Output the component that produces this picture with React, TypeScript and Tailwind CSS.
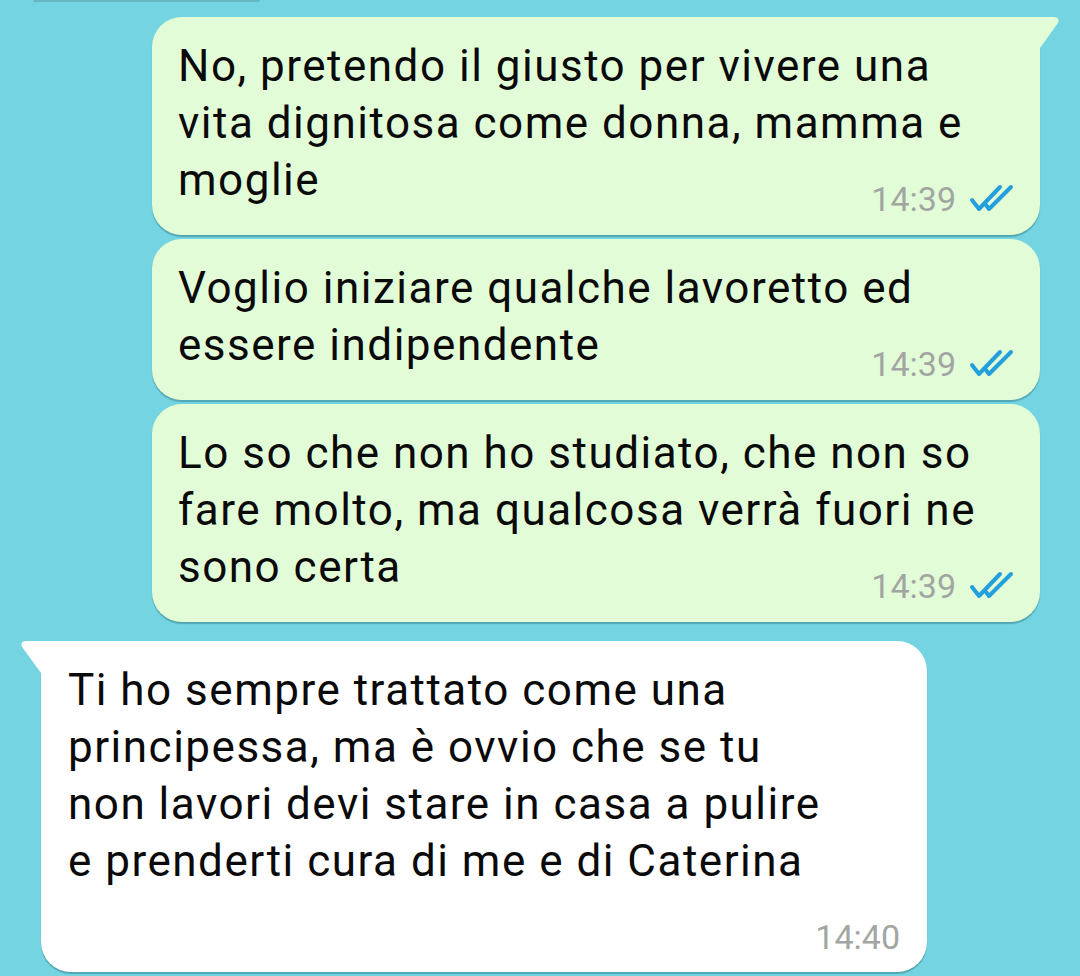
import React from "react";

const font = { fontFamily: "Roboto, 'Noto Sans', Arial, sans-serif" };

function Ticks() {
  return (
    <svg width="46" height="30" viewBox="0 0 46 30" className="ml-[13px] shrink-0">
      <path d="M3 16 L10 25 L31 3" fill="none" stroke="#23a0dc" strokeWidth="4" strokeLinecap="round" strokeLinejoin="round" />
      <path d="M17 21 L20 25 L42 3" fill="none" stroke="#23a0dc" strokeWidth="4" strokeLinecap="round" strokeLinejoin="round" />
    </svg>
  );
}

function Out({ lines, time, tail, className }: { lines: string[]; time: string; tail?: boolean; className?: string }) {
  return (
    <div
      className={
        "relative self-end mr-[40px] w-[888px] bg-[#e3fcd8] pt-[21px] pl-[26px] pr-[25px] pb-[19px] shadow-[0_2px_1px_rgba(40,110,120,0.45)] " +
        (tail ? "rounded-[30px] rounded-tr-none " : "rounded-[30px] ") +
        (className || "")
      }
    >
      {tail && (
        <svg className="absolute left-full top-0" width="20" height="32" viewBox="0 0 20 32">
          <path d="M0 0 H14 C18 0 20 3 17.5 6.5 L0 31 Z" fill="#e3fcd8" />
        </svg>
      )}
      {lines.map((l, i) => (
        <div key={i} className="whitespace-nowrap text-[44px] leading-[57px] tracking-[1.5px] text-[#0a0a0a]">
          {l}
        </div>
      ))}
      <div className="mt-[-27px] flex items-center justify-end h-[34px]">
        <span className="text-[34px] leading-[34px] text-[#a2a6a2]">{time}</span>
        <Ticks />
      </div>
    </div>
  );
}

export default function App() {
  return (
    <div style={font} className="w-[1080px] h-[976px] overflow-hidden bg-[#75d4e2] flex flex-col">
      <div className="ml-[33px] w-[227px] h-[2px] rounded-b-full bg-[#66b7c3] shrink-0" />
      <Out
        className="mt-[15px]"
        tail
        lines={["No, pretendo il giusto per vivere una", "vita dignitosa come donna, mamma e", "moglie"]}
        time="14:39"
      />
      <Out
        className="mt-[4px]"
        lines={["Voglio iniziare qualche lavoretto ed", "essere indipendente"]}
        time="14:39"
      />
      <Out
        className="mt-[4px]"
        lines={["Lo so che non ho studiato, che non so", "fare molto, ma qualcosa verrà fuori ne", "sono certa"]}
        time="14:39"
      />
      <div className="relative mt-[19px] ml-[41px] w-[886px] bg-white rounded-[30px] rounded-tl-none pt-[21px] pl-[27px] pr-[27px] pb-[18px] shadow-[0_2px_1px_rgba(40,110,120,0.45)]">
        <svg className="absolute right-full top-0" width="21" height="33" viewBox="0 0 21 33">
          <path d="M21 0 H6 C2 0 0 3 2.5 6.5 L21 32 Z" fill="#ffffff" />
        </svg>
        {[
          "Ti ho sempre trattato come una",
          "principessa, ma è ovvio che se tu",
          "non lavori devi stare in casa a pulire",
          "e prenderti cura di me e di Caterina",
        ].map((l, i) => (
          <div key={i} className="whitespace-nowrap text-[44px] leading-[57px] tracking-[1.5px] text-[#0a0a0a]">
            {l}
          </div>
        ))}
        <div className="mt-[30px] flex justify-end h-[34px]">
          <span className="text-[34px] leading-[34px] text-[#a2a6a2]">14:40</span>
        </div>
      </div>
    </div>
  );
}
